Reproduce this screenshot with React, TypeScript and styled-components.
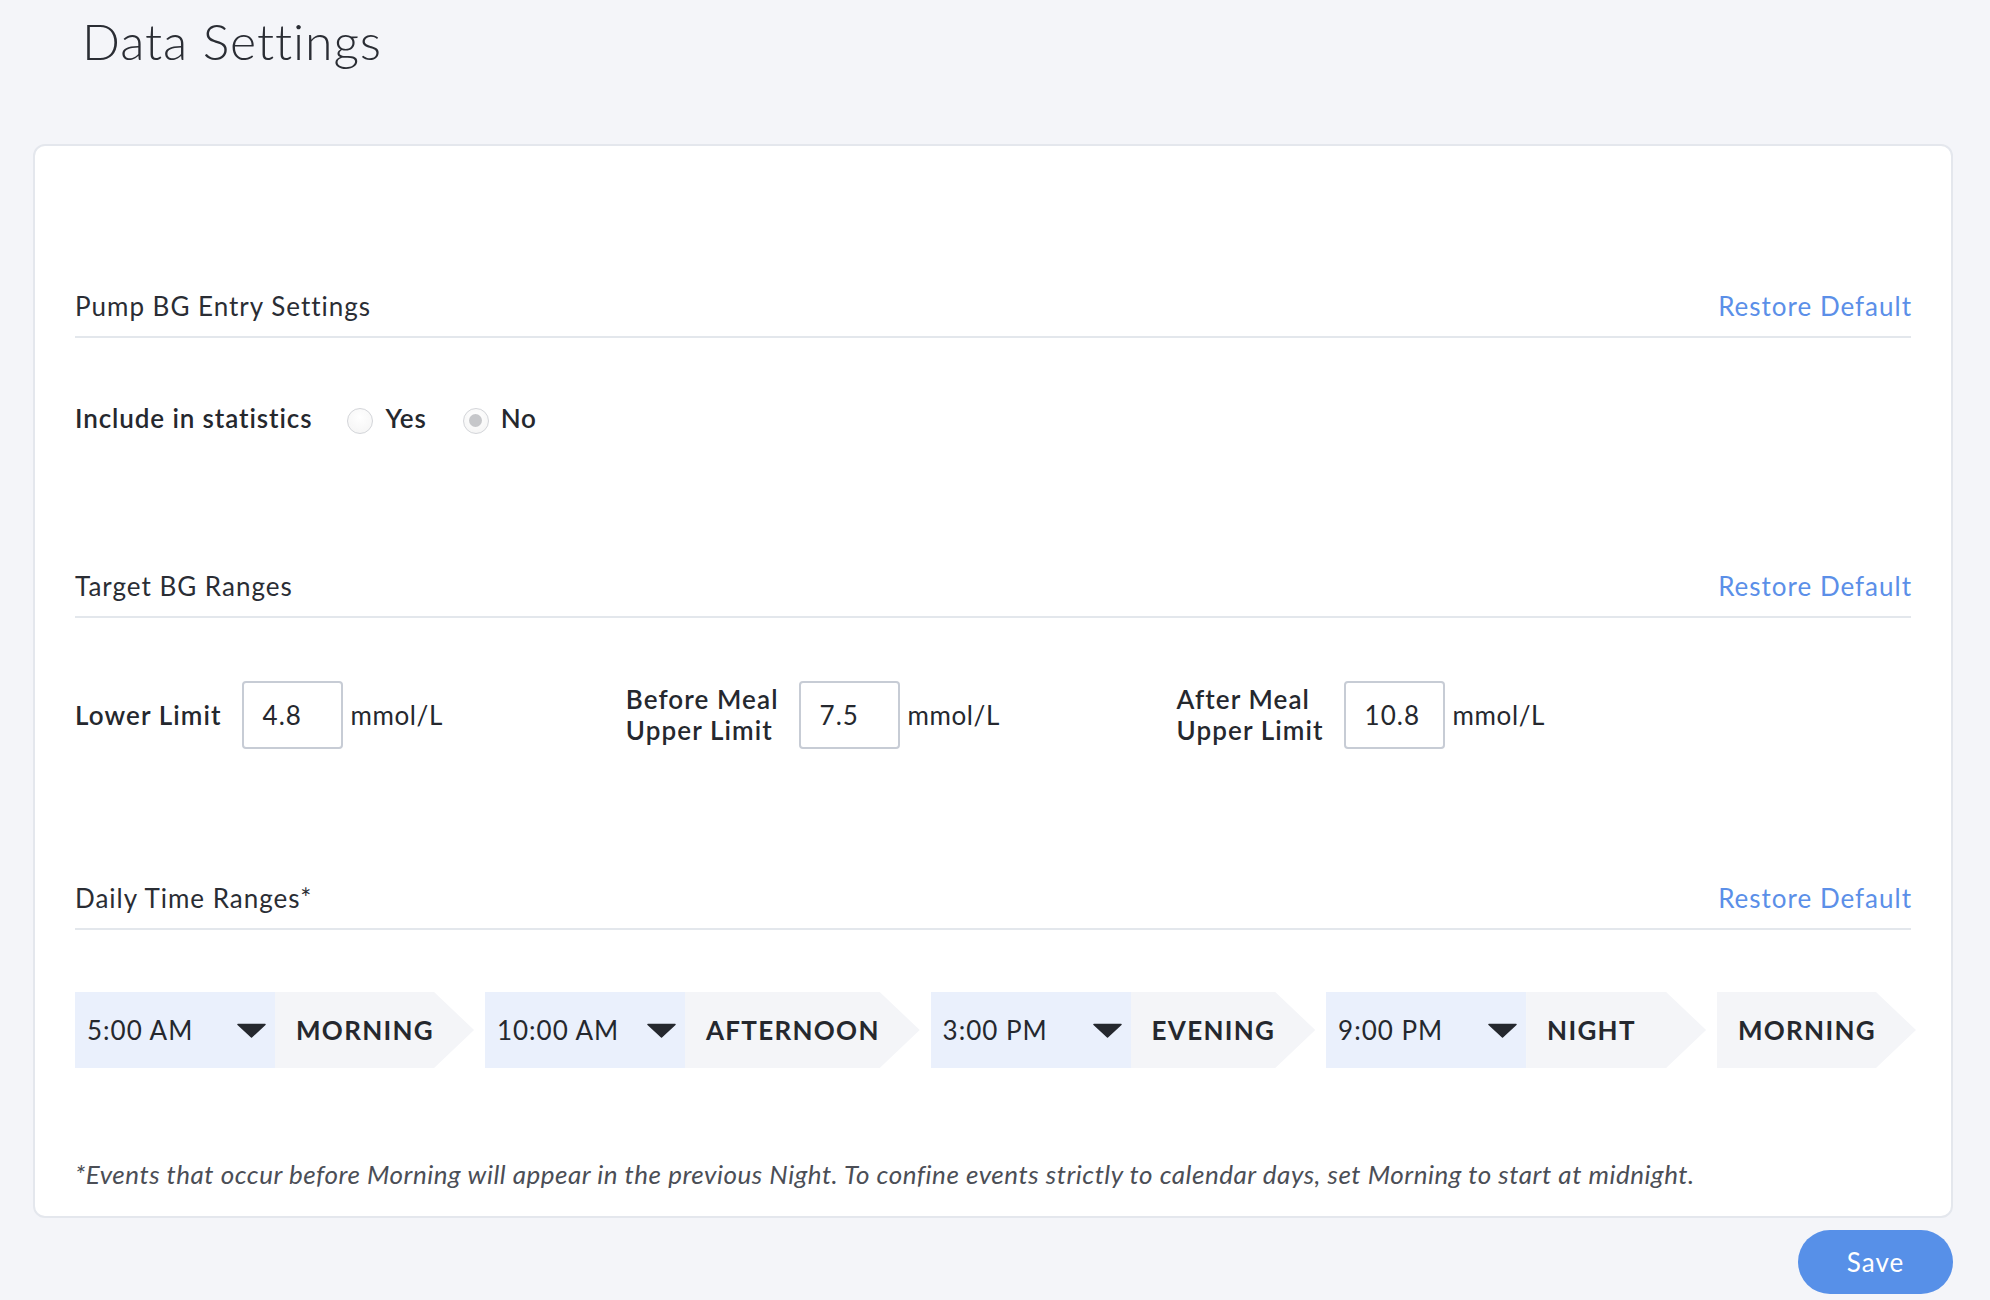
import React from "react";
import styled, { createGlobalStyle } from "styled-components";

const GlobalStyle = createGlobalStyle`
  html, body {
    margin: 0;
    padding: 0;
    background: #f4f5f9;
  }
  body {
    font-family: Lato, "Noto Sans", "Liberation Sans", sans-serif;
    color: #25282e;
    letter-spacing: 1px;
  }
  * { box-sizing: border-box; }
`;

const Page = styled.div`
  padding: 0 0 40px 33px;
  width: 1953px;
`;

const PageTitle = styled.h1`
  margin: 0;
  padding: 11px 0 0 49px;
  font-size: 50px;
  line-height: 60px;
  font-weight: 300;
  letter-spacing: 0.9px;
  color: #2a2d34;
`;

const Card = styled.div`
  margin-top: 73px;
  width: 1920px;
  background: #fff;
  border: 2px solid #e4e7ed;
  border-radius: 12px;
  padding: 144px 40px 26px;
`;

const SectionHeader = styled.div<{ $top?: number }>`
  display: flex;
  justify-content: space-between;
  align-items: center;
  margin-top: ${(p) => p.$top ?? 0}px;
  padding-bottom: 14px;
  border-bottom: 2px solid #e3e7ec;
  font-size: 26px;
  line-height: 32px;
`;

const SectionTitle = styled.span`
  color: #2a2d34;
`;

const RestoreLink = styled.a`
  color: #5b8fe8;
  cursor: pointer;
  text-decoration: none;
  margin-right: -1px;
`;

const RadioRow = styled.div`
  display: flex;
  align-items: center;
  height: 40px;
  margin-top: 60px;
`;

const FieldLabel = styled.span<{ $spacing?: number }>`
  font-size: 26px;
  line-height: 31px;
  font-weight: 600;
  letter-spacing: ${(p) => p.$spacing ?? 1.1}px;
  color: #25282e;
`;

const RadioGroup = styled.div`
  display: flex;
  align-items: center;
  gap: 36px;
  margin-left: 35px;
`;

const RadioOption = styled.label`
  display: flex;
  align-items: center;
  gap: 12px;
  font-size: 26px;
  font-weight: 600;
  letter-spacing: 0.8px;
  color: #25282e;
`;

const RadioCircle = styled.span<{ $checked?: boolean }>`
  position: relative;
  width: 26px;
  height: 26px;
  margin-top: 5px;
  border-radius: 50%;
  border: 1.5px solid #d3d5d9;
  background: radial-gradient(circle at 50% 35%, #ffffff 0%, #f3f3f3 100%);
  &::after {
    content: "";
    display: ${(p) => (p.$checked ? "block" : "none")};
    position: absolute;
    left: 50%;
    top: 50%;
    width: 13px;
    height: 13px;
    margin: -6.5px 0 0 -6.5px;
    border-radius: 50%;
    background: #c6c7ca;
  }
`;

const LimitsRow = styled.div`
  display: flex;
  align-items: center;
  height: 68px;
  margin-top: 63px;
`;

const LimitGroup = styled.div`
  width: 30%;
  display: flex;
  align-items: center;
`;

const LimitInput = styled.div`
  width: 101px;
  height: 68px;
  margin-left: 20px;
  border: 2px solid #c7ccd5;
  border-radius: 4px;
  padding-left: 19px;
  display: flex;
  align-items: center;
  font-size: 26px;
  color: #25282e;
`;

const Unit = styled.span`
  margin-left: 8px;
  font-size: 26px;
  letter-spacing: 0.6px;
  color: #25282e;
`;

const TimeRow = styled.div`
  display: flex;
  justify-content: space-between;
  height: 76px;
  margin-top: 62px;
  margin-right: -5px;
`;

const Segment = styled.div`
  display: flex;
  height: 100%;
`;

const TimeSelect = styled.div`
  width: 200px;
  height: 100%;
  background: #eaf0fc;
  padding: 0 9px 0 12px;
  display: flex;
  align-items: center;
  justify-content: space-between;
  font-size: 26px;
  color: #25282e;
`;

const PeriodLabel = styled.div`
  min-width: 180px;
  height: 100%;
  padding: 0 40px 0 21px;
  display: flex;
  align-items: center;
  background: #f4f5f8;
  clip-path: polygon(0 0, calc(100% - 40px) 0, 100% 50%, calc(100% - 40px) 100%, 0 100%);
  font-size: 26px;
  font-weight: 700;
  letter-spacing: 1.3px;
  text-transform: uppercase;
  color: #25282e;
  white-space: nowrap;
`;

const Footnote = styled.p`
  margin: 90px 0 0;
  font-size: 26px;
  line-height: 32px;
  font-style: italic;
  letter-spacing: 0.52px;
  color: #4b4e56;
`;

const Footer = styled.div`
  width: 1920px;
  display: flex;
  justify-content: flex-end;
  margin-top: 12px;
`;

const SaveButton = styled.button`
  width: 155px;
  height: 64px;
  border: none;
  border-radius: 32px;
  background: #5790e8;
  color: #fff;
  font-family: inherit;
  font-size: 26px;
  letter-spacing: 1px;
  cursor: pointer;
`;

const Caret = () => (
  <svg width="29" height="15" viewBox="0 0 29 15" aria-hidden="true">
    <path d="M1 1.5 L28 1.5 L14.5 14 Z" fill="#25282e" stroke="#25282e" strokeWidth="1.5" strokeLinejoin="round" />
  </svg>
);

type Range = { time?: string; period: string };

const ranges: Range[] = [
  { time: "5:00 AM", period: "Morning" },
  { time: "10:00 AM", period: "Afternoon" },
  { time: "3:00 PM", period: "Evening" },
  { time: "9:00 PM", period: "Night" },
  { period: "Morning" },
];

const limits = [
  { label: ["Lower Limit"], value: "4.8" },
  { label: ["Before Meal", "Upper Limit"], value: "7.5" },
  { label: ["After Meal", "Upper Limit"], value: "10.8" },
];

export default function App() {
  return (
    <>
      <GlobalStyle />
      <Page>
        <PageTitle>Data Settings</PageTitle>
        <Card>
          <SectionHeader>
            <SectionTitle>Pump BG Entry Settings</SectionTitle>
            <RestoreLink>Restore Default</RestoreLink>
          </SectionHeader>
          <RadioRow>
            <FieldLabel $spacing={0.9}>Include in statistics</FieldLabel>
            <RadioGroup>
              <RadioOption>
                <RadioCircle />
                Yes
              </RadioOption>
              <RadioOption>
                <RadioCircle $checked />
                No
              </RadioOption>
            </RadioGroup>
          </RadioRow>

          <SectionHeader $top={132}>
            <SectionTitle>Target BG Ranges</SectionTitle>
            <RestoreLink>Restore Default</RestoreLink>
          </SectionHeader>
          <LimitsRow>
            {limits.map((l) => (
              <LimitGroup key={l.value}>
                <FieldLabel>
                  {l.label.map((line, i) => (
                    <React.Fragment key={line}>
                      {i > 0 && <br />}
                      {line}
                    </React.Fragment>
                  ))}
                </FieldLabel>
                <LimitInput>{l.value}</LimitInput>
                <Unit>mmol/L</Unit>
              </LimitGroup>
            ))}
          </LimitsRow>

          <SectionHeader $top={133}>
            <SectionTitle>Daily Time Ranges*</SectionTitle>
            <RestoreLink>Restore Default</RestoreLink>
          </SectionHeader>
          <TimeRow>
            {ranges.map((r, i) => (
              <Segment key={i}>
                {r.time && (
                  <TimeSelect>
                    <span>{r.time}</span>
                    <Caret />
                  </TimeSelect>
                )}
                <PeriodLabel>{r.period}</PeriodLabel>
              </Segment>
            ))}
          </TimeRow>
          <Footnote>
            *Events that occur before Morning will appear in the previous Night. To confine events strictly to calendar days, set Morning to start at midnight.
          </Footnote>
        </Card>
        <Footer>
          <SaveButton>Save</SaveButton>
        </Footer>
      </Page>
    </>
  );
}
